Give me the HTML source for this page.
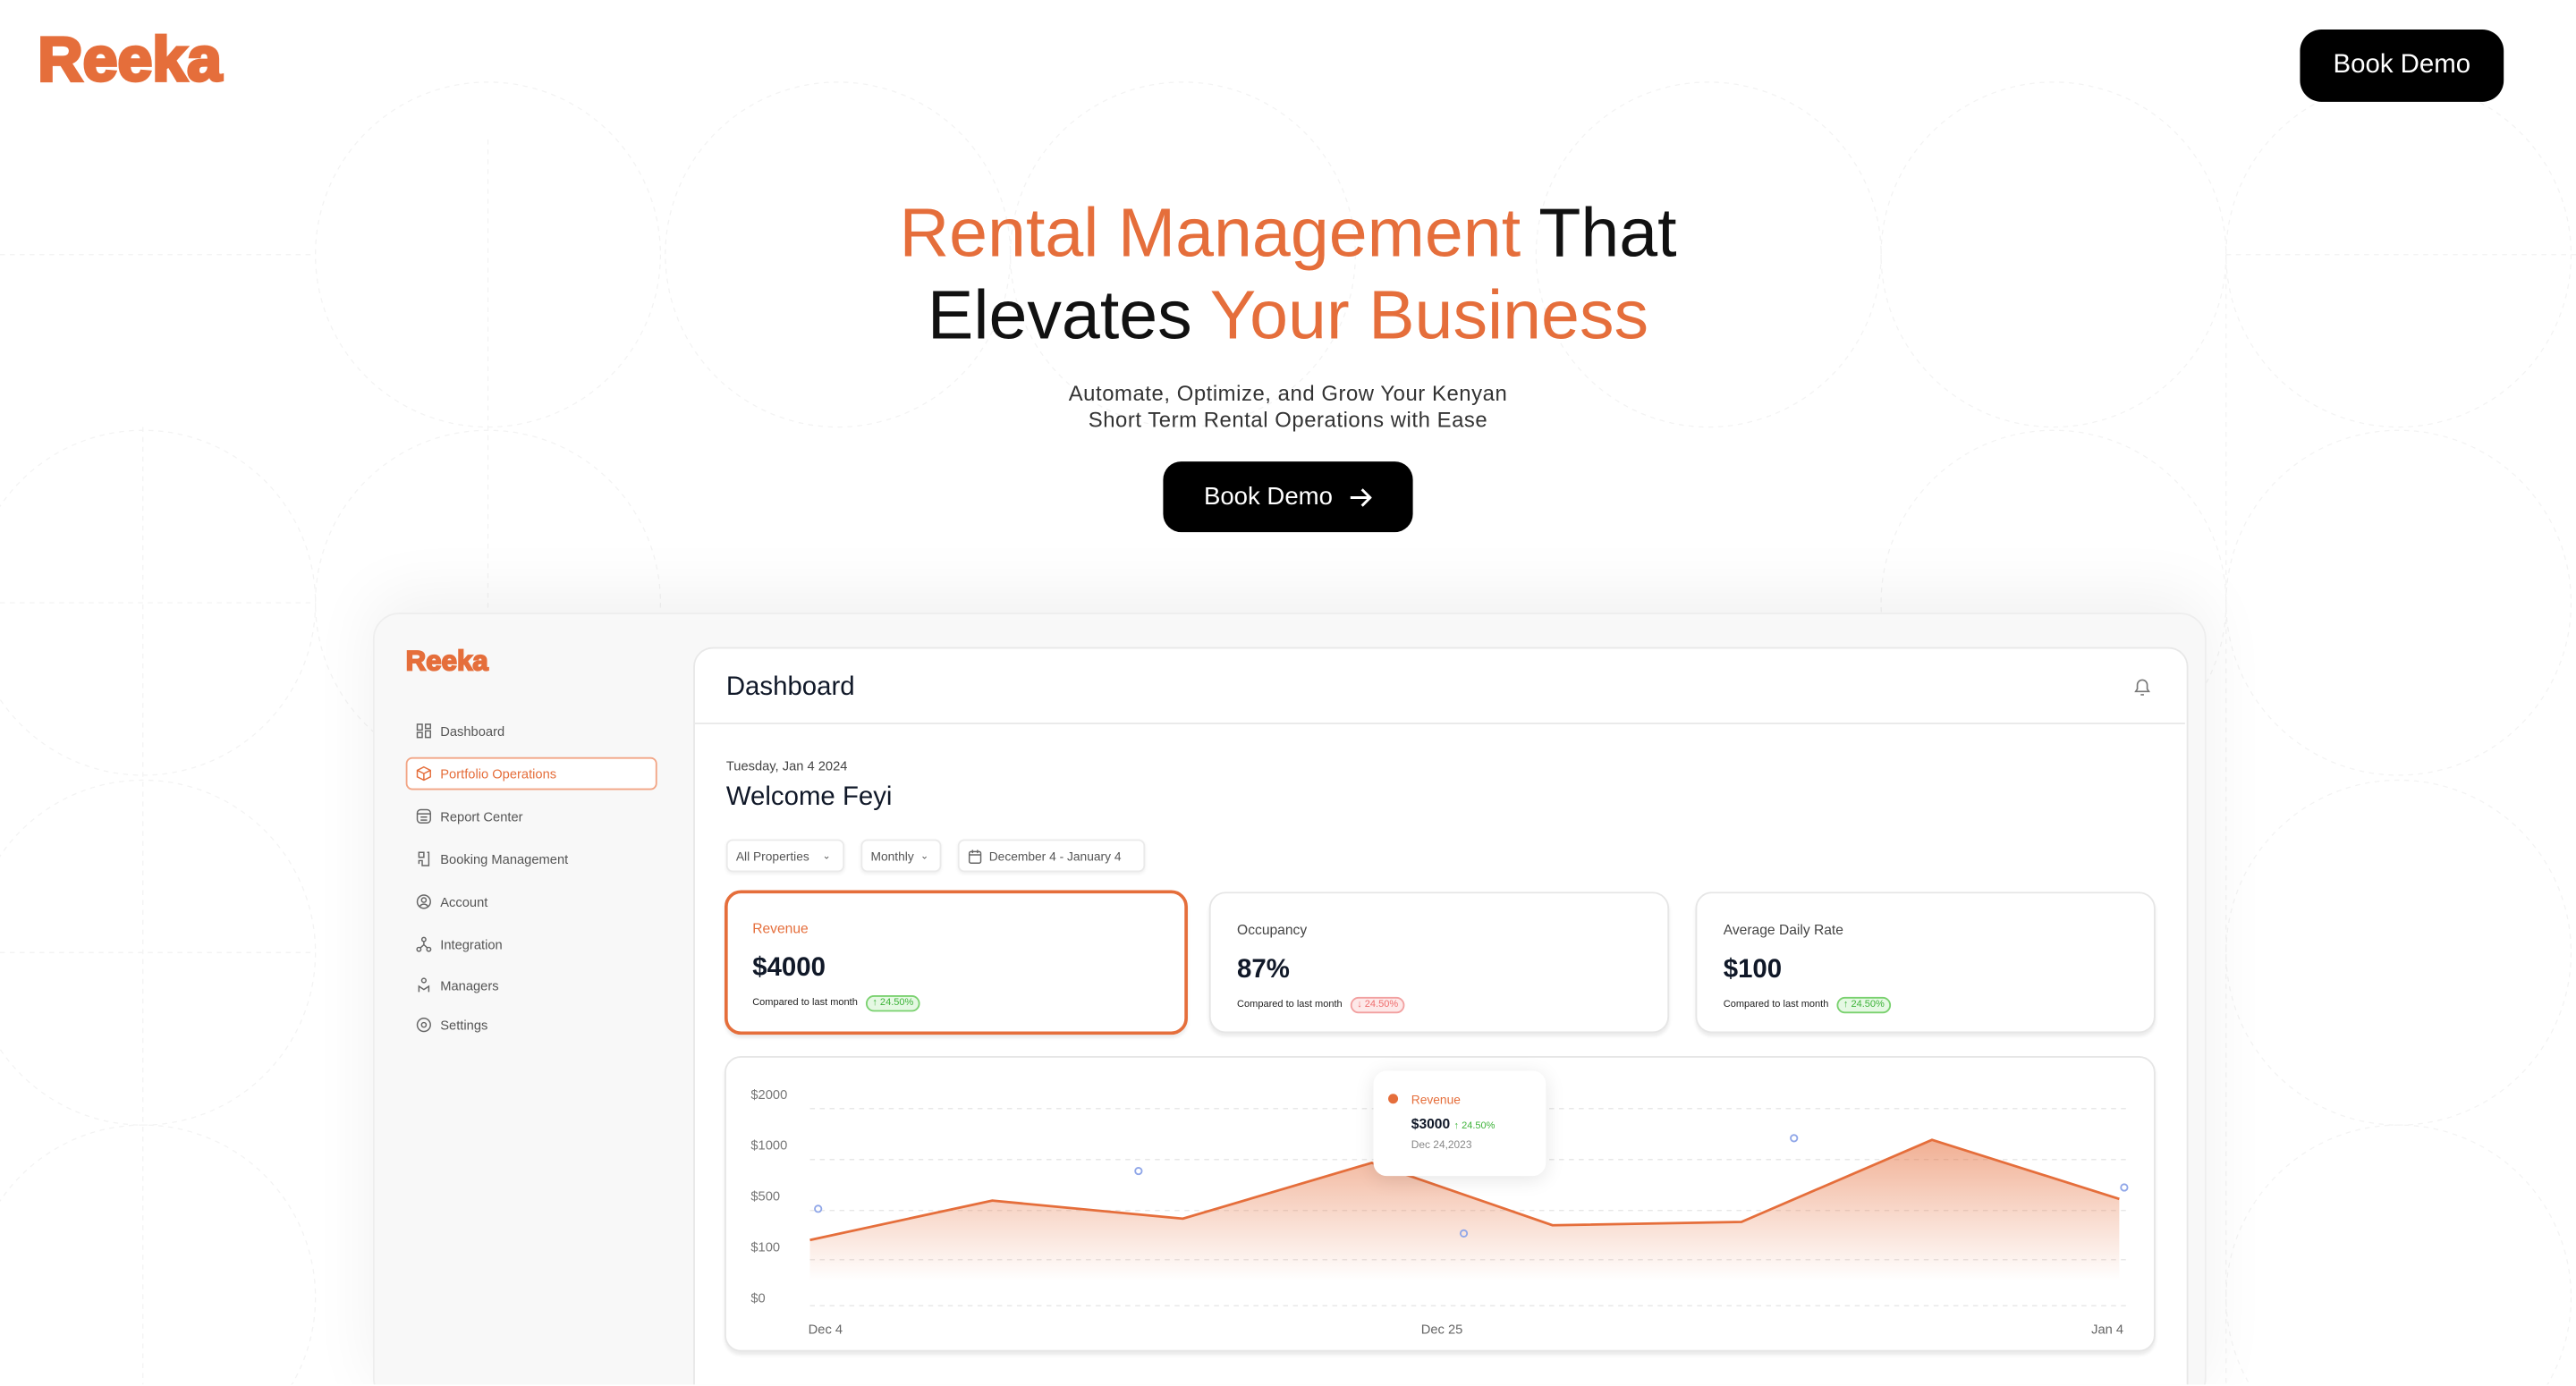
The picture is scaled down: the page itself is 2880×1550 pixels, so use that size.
<!DOCTYPE html>
<html><head><meta charset="utf-8">
<style>
html,body{margin:0;padding:0;width:2880px;height:1550px;overflow:hidden;background:#fff}
#w{position:absolute;left:0;top:0;width:1568px;height:843px;transform:scale(1.836735);transform-origin:0 0;font-family:"Liberation Sans",sans-serif;overflow:hidden}
.a{position:absolute}
.logo{font-family:"Liberation Sans",sans-serif;font-weight:900;color:#E56E3B;-webkit-text-stroke:2px #E56E3B;letter-spacing:0px}
.nav{position:absolute;left:253px;font-size:8px;color:#555;display:flex;align-items:center;gap:5px}
.nav svg{width:10px;height:10px}
.card{position:absolute;top:543px;height:84px;background:#fff;border:1px solid #e6e6e6;border-radius:10px;box-shadow:0 2px 2px rgba(0,0,0,.08)}
.card .l{position:absolute;left:16px;top:17px;font-size:8.5px;color:#444}
.card .v{position:absolute;left:16px;top:38px;font-size:16px;font-weight:bold;color:#101828}
.card .c{position:absolute;left:16px;top:63px;font-size:6px;color:#222;display:flex;align-items:center;gap:5px}
.pill{border-radius:6px;padding:1px 3px;font-size:6px}
.g{background:#e5f8e3;border:1px solid #7ad16f;color:#3eb33a}
.r{background:#fde8e8;border:1px solid #f2a0a0;color:#ef6d6d}
.f{position:absolute;top:511px;height:20px;background:#fff;border:1px solid #eaeaea;border-radius:4px;box-shadow:0 1px 2px rgba(0,0,0,.06);font-size:7.5px;color:#555;display:flex;align-items:center;padding:0 5px;box-sizing:border-box;gap:4px}
.yl{position:absolute;left:457px;font-size:8px;color:#777}
</style></head><body><div id="w">
<svg class="a" style="left:0;top:0" width="1568" height="843" fill="none" stroke="#f3f3f3" stroke-width="0.7" stroke-dasharray="3 3">
<circle cx="297" cy="155" r="105"/><circle cx="510" cy="155" r="105"/><circle cx="720" cy="155" r="105"/><circle cx="1040" cy="155" r="105"/><circle cx="1250" cy="155" r="105"/><circle cx="1460" cy="155" r="105"/>
<circle cx="87" cy="367" r="105"/><circle cx="297" cy="367" r="105"/><circle cx="1250" cy="367" r="105"/><circle cx="1460" cy="367" r="105"/><circle cx="87" cy="580" r="105"/><circle cx="1460" cy="580" r="105"/><circle cx="87" cy="790" r="105"/><circle cx="1460" cy="790" r="105"/>
<line x1="0" y1="155" x2="190" y2="155"/><line x1="1355" y1="155" x2="1568" y2="155"/><line x1="87" y1="260" x2="87" y2="843"/><line x1="1355" y1="155" x2="1355" y2="843"/><line x1="297" y1="85" x2="297" y2="370"/><line x1="0" y1="367" x2="190" y2="367"/><line x1="0" y1="580" x2="190" y2="580"/>
</svg>
<div class="a logo" style="left:23px;top:16px;font-size:38px">Reeka</div>
<div class="a" style="left:1400px;top:18px;width:124px;height:44px;background:#000;border-radius:13px;color:#fff;font-size:16px;display:flex;align-items:center;justify-content:center">Book Demo</div>
<div class="a" style="left:0;top:117px;width:1568px;text-align:center;font-size:42px;line-height:50px;color:#111"><span style="color:#E56E3B">Rental Management</span> That<br>Elevates <span style="color:#E56E3B">Your Business</span></div>
<div class="a" style="left:0;top:232px;width:1568px;text-align:center;font-size:13px;line-height:16px;color:#333;letter-spacing:.3px">Automate, Optimize, and Grow Your Kenyan<br>Short Term Rental Operations with Ease</div>
<div class="a" style="left:708px;top:281px;width:152px;height:43px;background:#000;border-radius:11px;color:#fff;font-size:15px;display:flex;align-items:center;justify-content:center;gap:10px">Book Demo <svg width="14" height="12" viewBox="0 0 14 12" fill="none" stroke="#fff" stroke-width="1.6"><path d="M1 6h12M8 1l5 5-5 5"/></svg></div>

<div class="a" style="left:227px;top:373px;width:1114px;height:480px;background:#f8f8f8;border:1px solid #eee;border-radius:16px;box-shadow:0 -10px 40px rgba(0,0,0,.06)"></div>
<div class="a logo" style="left:247px;top:393px;font-size:17px;-webkit-text-stroke:1px #E56E3B">Reeka</div>
<div class="a" style="left:247px;top:461px;width:153px;height:20px;border:1px solid #f2a585;border-radius:4px;background:#fff;box-sizing:border-box"></div>
<div class="nav" style="top:440px"><svg viewBox="0 0 10 10" fill="none" stroke="#666" stroke-width=".8"><rect x="1" y="1" width="3" height="3.5"/><rect x="6" y="1" width="3" height="2.5"/><rect x="1" y="6" width="3" height="3"/><rect x="6" y="5" width="3" height="4"/></svg>Dashboard</div>
<div class="nav" style="top:466px;color:#E56E3B"><svg viewBox="0 0 10 10" fill="none" stroke="#E56E3B" stroke-width=".8"><path d="M5 1 9 3v4L5 9 1 7V3z M1 3l4 2 4-2M5 5v4"/></svg>Portfolio Operations</div>
<div class="nav" style="top:492px"><svg viewBox="0 0 10 10" fill="none" stroke="#666" stroke-width=".8"><rect x="1" y="1" width="8" height="8" rx="2"/><path d="M1 3.5h8M3 5.5h4M3 7.3h4"/></svg>Report Center</div>
<div class="nav" style="top:518px"><svg viewBox="0 0 10 10" fill="none" stroke="#666" stroke-width=".8"><path d="M2 1h3v3H2zM7 1h1v8H4v-3H2v2"/></svg>Booking Management</div>
<div class="nav" style="top:544px"><svg viewBox="0 0 10 10" fill="none" stroke="#666" stroke-width=".8"><circle cx="5" cy="5" r="4"/><circle cx="5" cy="4" r="1.4"/><path d="M2.5 8c1-2 4-2 5 0"/></svg>Account</div>
<div class="nav" style="top:570px"><svg viewBox="0 0 10 10" fill="none" stroke="#666" stroke-width=".8"><circle cx="5" cy="2" r="1.2"/><circle cx="2" cy="8" r="1.2"/><circle cx="8" cy="8" r="1.2"/><path d="M5 3.2v2L3 7M5 5.2 7 7"/></svg>Integration</div>
<div class="nav" style="top:595px"><svg viewBox="0 0 10 10" fill="none" stroke="#666" stroke-width=".8"><circle cx="5" cy="2" r="1.3"/><path d="M2 9V5.5l3 2 3-2V9"/></svg>Managers</div>
<div class="nav" style="top:619px"><svg viewBox="0 0 10 10" fill="none" stroke="#666" stroke-width=".8"><circle cx="5" cy="5" r="4"/><circle cx="5" cy="5" r="1.4"/></svg>Settings</div>

<div class="a" style="left:422px;top:394px;width:908px;height:460px;background:#fff;border:1px solid #e8e8e8;border-radius:12px"></div>
<div class="a" style="left:442px;top:410px;font-size:16px;color:#101828">Dashboard</div>
<svg class="a" style="left:1298px;top:412px" width="12" height="13" viewBox="0 0 12 13" fill="none" stroke="#777" stroke-width=".9"><path d="M2 9h8L9 7.5V5a3 3 0 0 0-6 0v2.5zM5 11h2"/></svg>
<div class="a" style="left:423px;top:440px;width:907px;height:1px;background:#e8e8e8"></div>
<div class="a" style="left:442px;top:462px;font-size:8px;color:#444">Tuesday, Jan 4 2024</div>
<div class="a" style="left:442px;top:477px;font-size:16px;color:#101828">Welcome Feyi</div>
<div class="f" style="left:442px;width:72px">All Properties <span style="margin-left:4px;font-size:6px">⌄</span></div>
<div class="f" style="left:524px;width:49px">Monthly <span style="font-size:6px">⌄</span></div>
<div class="f" style="left:583px;width:114px"><svg width="9" height="9" viewBox="0 0 9 9" fill="none" stroke="#666" stroke-width=".8"><rect x="1" y="1.5" width="7" height="7" rx="1"/><path d="M1 3.5h7M3 .5v2M6 .5v2"/></svg>December 4 - January 4</div>

<div class="card" style="left:441px;width:278px;border:2px solid #E56E3B;top:542px"><div class="l" style="color:#E56E3B;left:15px;top:16px">Revenue</div><div class="v" style="left:15px;top:37px">$4000</div><div class="c" style="left:15px;top:62px">Compared to last month <span class="pill g">↑ 24.50%</span></div></div>
<div class="card" style="left:736px;width:278px"><div class="l">Occupancy</div><div class="v">87%</div><div class="c">Compared to last month <span class="pill r">↓ 24.50%</span></div></div>
<div class="card" style="left:1032px;width:278px"><div class="l">Average Daily Rate</div><div class="v">$100</div><div class="c">Compared to last month <span class="pill g">↑ 24.50%</span></div></div>

<div class="a" style="left:441px;top:643px;width:869px;height:178px;background:#fff;border:1px solid #e6e6e6;border-radius:10px;box-shadow:0 2px 2px rgba(0,0,0,.08)"></div>
<div class="yl" style="top:662px">$2000</div><div class="yl" style="top:693px">$1000</div><div class="yl" style="top:724px">$500</div><div class="yl" style="top:755px">$100</div><div class="yl" style="top:786px">$0</div>
<svg class="a" style="left:0;top:0" width="1568" height="843">
<defs><linearGradient id="gr" x1="0" y1="0" x2="0" y2="1"><stop offset="0" stop-color="#E56E3B" stop-opacity=".55"/><stop offset="1" stop-color="#E56E3B" stop-opacity="0"/></linearGradient></defs>
<g stroke="#e8e8e8" stroke-width=".8" stroke-dasharray="3 3"><line x1="493" y1="675" x2="1295" y2="675"/><line x1="493" y1="706" x2="1295" y2="706"/><line x1="493" y1="737" x2="1295" y2="737"/><line x1="493" y1="767" x2="1295" y2="767"/><line x1="493" y1="795" x2="1295" y2="795"/></g>
<path d="M493 755 604 731 720 742 835 708 945 746 1060 744 1176 694 1290 730V780H493Z" fill="url(#gr)"/>
<path d="M493 755 604 731 720 742 835 708 945 746 1060 744 1176 694 1290 730" fill="none" stroke="#E56E3B" stroke-width="1.5"/>
<g fill="none" stroke="#8fa6e8" stroke-width="1"><circle cx="498" cy="736" r="2"/><circle cx="693" cy="713" r="2"/><circle cx="891" cy="751" r="2"/><circle cx="1092" cy="693" r="2"/><circle cx="1293" cy="723" r="2"/></g>
</svg>
<div class="a" style="left:492px;top:805px;font-size:8px;color:#666">Dec 4</div>
<div class="a" style="left:865px;top:805px;font-size:8px;color:#666">Dec 25</div>
<div class="a" style="left:1273px;top:805px;font-size:8px;color:#666">Jan 4</div>
<div class="a" style="left:836px;top:652px;width:105px;height:64px;background:#fff;border-radius:8px;box-shadow:0 2px 12px rgba(0,0,0,.1)"></div>
<div class="a" style="left:845px;top:666px;width:6px;height:6px;border-radius:50%;background:#E56E3B"></div>
<div class="a" style="left:859px;top:665px;font-size:7.5px;color:#E56E3B">Revenue</div>
<div class="a" style="left:859px;top:679px;font-size:8.5px;font-weight:bold;color:#101828">$3000 <span style="font-size:6px;font-weight:normal;color:#3eb33a">↑ 24.50%</span></div>
<div class="a" style="left:859px;top:694px;font-size:6.5px;color:#888">Dec 24,2023</div>
</div></body></html>
